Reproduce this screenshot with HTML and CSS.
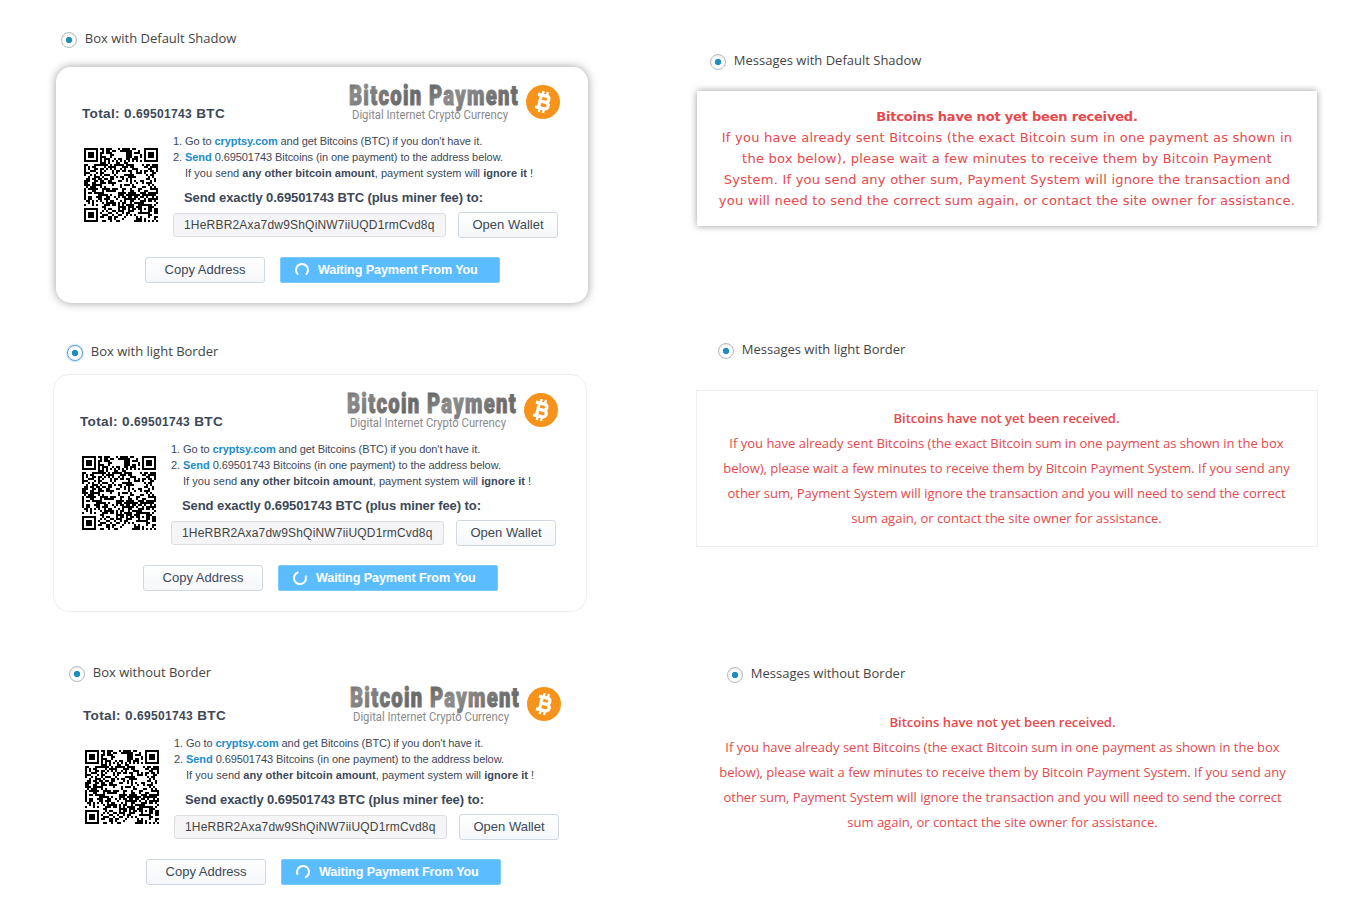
FILE: index.html
```html
<!DOCTYPE html>
<html lang="en">
<head>
<meta charset="utf-8">
<title>Payment box styles</title>
<link rel="stylesheet" href="styles.css">
</head>
<body>
<svg class="defs" width="0" height="0">
  <defs>
    <linearGradient id="steel" x1="0" y1="0" x2="1" y2="0.25">
      <stop offset="0" stop-color="#666"/><stop offset=".12" stop-color="#8c8c8c"/><stop offset=".3" stop-color="#777"/>
      <stop offset=".5" stop-color="#686868"/><stop offset=".7" stop-color="#8d8d8d"/><stop offset="1" stop-color="#6c6c6c"/>
    </linearGradient>
    <symbol id="logo" viewBox="0 0 214 44">
      <text class="logo-title" transform="translate(1 23) scale(.75 1)" textLength="225" lengthAdjust="spacing">Bitcoin Payment</text>
      <text class="logo-sub" x="4" y="37" textLength="156" lengthAdjust="spacingAndGlyphs">Digital Internet Crypto Currency</text>
      <circle cx="195" cy="20" r="17" fill="#f7931a"/>
      <g transform="translate(195.3 20) rotate(13) scale(1.08)" fill="none" stroke="#fff">
        <path stroke-width="3" d="M-3.2-6V6M-6.5-6H1.5C5.5-6 5.5-.3 1.5-.3H-3M1.5-.3C6.6-.3 6.6 6 1.5 6H-6.5"/>
        <path stroke-width="2.2" d="M-2-10V-6M2-10V-6M-2 6V10M2 6V10"/>
      </g>
    </symbol>
    <symbol id="qr" viewBox="0 0 37 37"><path id="qr-modules"/></symbol>
  </defs>
</svg>
<main class="page">
  <section class="column boxes">
    <label class="option opt-a"><span class="radio"></span>Box with Default Shadow</label>
    <article class="card card-shadow"></article>
    <label class="option opt-b"><span class="radio radio-focus"></span>Box with light Border</label>
    <article class="card card-border"></article>
    <label class="option opt-c"><span class="radio"></span>Box without Border</label>
    <article class="card card-plain"></article>
  </section>
  <section class="column messages">
    <label class="option opt-d"><span class="radio"></span>Messages with Default Shadow</label>
    <p class="message message-shadow"><b>Bitcoins have not yet been received.</b><br>
      If you have already sent Bitcoins (the exact Bitcoin sum in one payment as shown in<br>
      the box below), please wait a few minutes to receive them by Bitcoin Payment<br>
      System. If you send any other sum, Payment System will ignore the transaction and<br>
      you will need to send the correct sum again, or contact the site owner for assistance.</p>
    <label class="option opt-e"><span class="radio"></span>Messages with light Border</label>
    <p class="message message-border"><b>Bitcoins have not yet been received.</b><br>
      If you have already sent Bitcoins (the exact Bitcoin sum in one payment as shown in the box<br>
      below), please wait a few minutes to receive them by Bitcoin Payment System. If you send any<br>
      other sum, Payment System will ignore the transaction and you will need to send the correct<br>
      sum again, or contact the site owner for assistance.</p>
    <label class="option opt-f"><span class="radio"></span>Messages without Border</label>
    <p class="message message-plain"><b>Bitcoins have not yet been received.</b><br>
      If you have already sent Bitcoins (the exact Bitcoin sum in one payment as shown in the box<br>
      below), please wait a few minutes to receive them by Bitcoin Payment System. If you send any<br>
      other sum, Payment System will ignore the transaction and you will need to send the correct<br>
      sum again, or contact the site owner for assistance.</p>
  </section>
</main>
<template id="payment">
  <header class="head">
    <div class="total">Total: 0.<small>69501743</small> BTC</div>
    <svg class="logo" width="214" height="44"><use href="#logo"/></svg>
  </header>
  <div class="body">
    <svg class="qr" width="74" height="74"><use href="#qr"/></svg>
    <div class="details">
      <div class="step s1">1. Go to <a>cryptsy.com</a> and get Bitcoins (BTC) if you don't have it.</div>
      <div class="step s2">2. <a>Send</a> 0.69501743 Bitcoins (in one payment) to the address below.</div>
      <div class="step s3">If you send <b>any other bitcoin amount</b>, payment system will <b>ignore it</b> !</div>
      <div class="send">Send exactly 0.69501743 BTC (plus miner fee) to:</div>
      <div class="row">
        <div class="address">1HeRBR2Axa7dw9ShQiNW7iiUQD1rmCvd8q</div>
        <div class="button wallet">Open Wallet</div>
      </div>
    </div>
  </div>
  <footer class="actions">
    <div class="button copy">Copy Address</div>
    <div class="waiting"><svg class="spinner" width="16" height="16" viewBox="-8 -8 16 16"><path d="M-3.9 4.5A6 6 0 1 1 3.9 4.5"/></svg>Waiting Payment From You</div>
  </footer>
</template>
<script src="main.js"></script>
</body>
</html>
```
FILE: styles.css
```css
body { margin: 0; background: #fff; }
.defs { position: absolute; }
.page { display: flex; width: 1350px; height: 920px; overflow: hidden; }
.column { display: flex; flex-direction: column; align-items: flex-start; }
.boxes { width: 643px; padding: 28px 0 0 53px; }
.messages { padding-top: 50px; }
.option { display: flex; gap: 7.8px; height: 20px; font: 13px/20px "Open Sans", sans-serif; color: #444; white-space: nowrap; }
.radio { box-sizing: border-box; width: 16px; height: 16px; margin-top: 4px; border: 1px solid #b4b9be; border-radius: 50%;
  background: radial-gradient(circle, #1e8cbe 2.8px, #fff 3.6px); box-shadow: inset 0 1px 2px rgba(0,0,0,.1); }
.radio-focus { border-color: #5b9dd9; box-shadow: 0 0 2px rgba(30,140,190,.8); }
.opt-a { margin-left: 8px; }
.opt-b { margin: 38px 0 0 14px; }
.opt-c { margin: 50px 0 0 16px; }
.opt-d { margin-left: 14px; }
.opt-e { margin: 113px 0 0 22px; }
.opt-f { margin: 116px 0 0 31px; }

.card { width: 532px; color: #3c4858; font-family: "Liberation Sans", Arial, sans-serif; }
.card-shadow { height: 236px; margin: 19px 0 0 3px; border-radius: 15px; box-shadow: 0 0 10px rgba(0,0,0,.38); }
.card-border { height: 236px; margin-top: 13px; border: 1px solid #eee; border-radius: 16px; }
.card-plain { margin: -13px 0 0 4px; height: 236px; }
.head { display: flex; justify-content: space-between; padding: 15px 26px 0 26px; }
.total { padding-top: 24px; font: bold 13.6px/16px "Liberation Sans", Arial, sans-serif; letter-spacing: .33px; white-space: nowrap; }
.total small { font-size: 12px; }
.logo { display: block; }
.logo-title { font: 900 27px Roboto, sans-serif; fill: url(#steel); stroke: url(#steel); stroke-width: 1px; }
.logo-sub { font: 12px Roboto, sans-serif; fill: #8a8a8a; }
.body { display: flex; gap: 15px; padding: 7px 0 0 28px; }
.qr { margin-top: 15px; shape-rendering: crispEdges; }
.step { height: 16px; font-size: 11px; line-height: 16px; white-space: nowrap; }
.step a { color: #1a8ccc; font-weight: bold; }
.s1 { letter-spacing: -.08px; }
.s2 { letter-spacing: -.07px; }
.s3 { padding-left: 12px; letter-spacing: .04px; }
.send { padding: 9px 0 0 11px; height: 16px; font: bold 13px/16px "Liberation Sans", Arial, sans-serif; letter-spacing: -.08px; white-space: nowrap; }
.row { display: flex; align-items: center; gap: 12px; margin-top: 6px; }
.address { box-sizing: border-box; width: 273px; height: 24px; padding-left: 10px; border: 1px solid #dcdee3; border-radius: 3px; background: #f5f5f7; font-size: 12px; line-height: 22px; letter-spacing: .19px; color: #444; }
.button { box-sizing: border-box; height: 26px; border: 1px solid #d0d9e2; border-radius: 3px; background: linear-gradient(#fff, #f5f7fa); font-size: 13px; line-height: 24px; text-align: center; }
.wallet { width: 100px; }
.copy { width: 120px; }
.actions { display: flex; gap: 15px; padding: 19px 0 0 89px; }
.waiting { display: flex; align-items: center; gap: 8px; box-sizing: border-box; width: 220px; height: 26px; padding-left: 13px; border: 1px solid #7accff; border-radius: 2px; background: #5bbdff; color: #fff; font-size: 12.6px; font-weight: bold; letter-spacing: -.1px; white-space: nowrap; }
.spinner path { fill: none; stroke: #fff; stroke-width: 2; }
.card-border .spinner { transform: rotate(205deg); }
.card-plain .spinner { transform: rotate(22deg); }

.message { box-sizing: border-box; margin: 0; text-align: center; white-space: nowrap; color: #e8484c; }
.message-shadow { width: 620px; height: 135px; margin: 21px 0 0 1px; padding-top: 15px; box-shadow: 0 0 7px rgba(0,0,0,.4); font: 13px/21px "DejaVu Sans", Verdana, sans-serif; letter-spacing: .235px; }
.message-shadow b { letter-spacing: -.2px; }
.message-border { width: 622px; height: 157px; margin-top: 31px; padding: 15px 1px 0 0; border: 1px solid #eee; font: 13px/25px "Open Sans", sans-serif; }
.message-plain { width: 613px; margin-top: 27px; font: 13px/25px "Open Sans", sans-serif; }
.message-border b, .message-plain b { font-weight: 600; }
```
FILE: main.js
```js
const size = 37;
let seed = 20177;
const next = () => (seed = (seed * 1103515245 + 12345) % 2147483648) / 2147483648;

const finder = (x, y) => {
  const d = Math.max(Math.abs(x - 3), Math.abs(y - 3));
  return d === 3 || d <= 1;
};

function moduleAt(x, y) {
  const random = next() < 0.5;
  if (x < 8 && y < 8) return x < 7 && y < 7 && finder(x, y);
  if (x > 28 && y < 8) return x > 29 && y < 7 && finder(x - 30, y);
  if (x < 8 && y > 28) return x < 7 && y > 29 && finder(x, y - 30);
  if (x === 6 || y === 6) return (x + y) % 2 === 0;
  const d = Math.max(Math.abs(x - 30), Math.abs(y - 30));
  if (d <= 2) return d !== 1;
  return random;
}

let path = "";
for (let y = 0; y < size; y++) {
  for (let x = 0; x < size; x++) {
    if (moduleAt(x, y)) path += `M${x} ${y}h1v1h-1z`;
  }
}
document.getElementById("qr-modules").setAttribute("d", path);

const template = document.getElementById("payment");
document.querySelectorAll(".card").forEach((card) => card.append(template.content.cloneNode(true)));
```
